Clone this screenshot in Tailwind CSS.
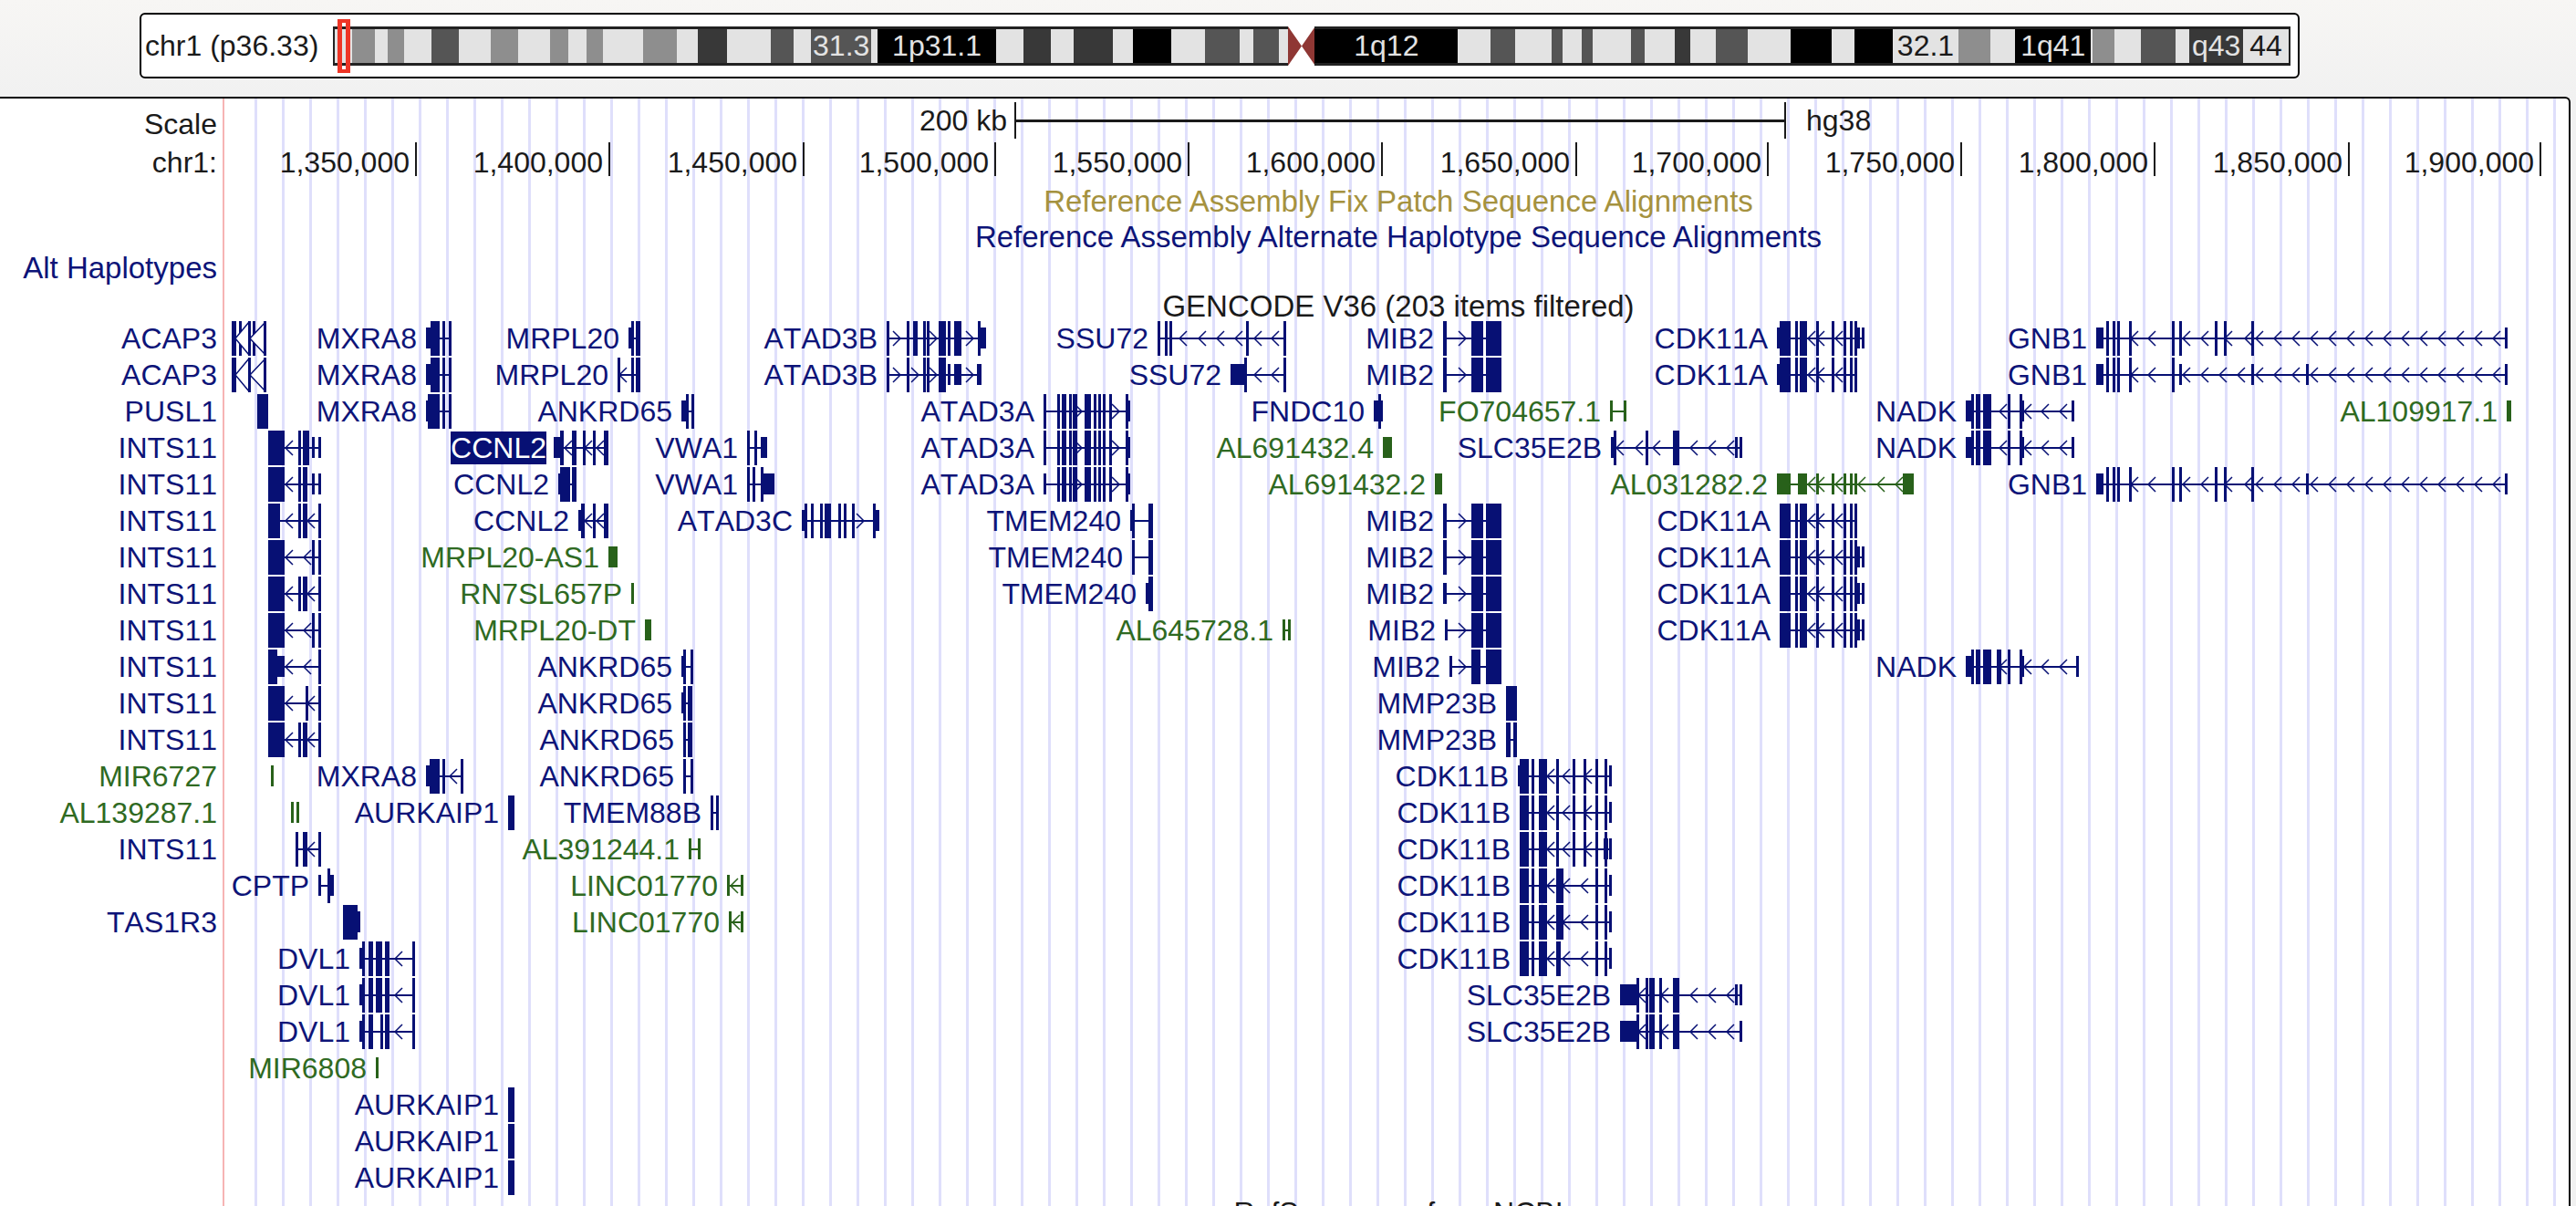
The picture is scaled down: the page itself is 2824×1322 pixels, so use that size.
<!DOCTYPE html>
<html lang="en">
<head>
<meta charset="utf-8">
<title>chr1 genome browser</title>
<script src="https://cdn.jsdelivr.net/npm/@tailwindcss/browser@4"></script>
</head>
<body class="flex h-screen flex-col overflow-hidden bg-[#f1f1f1] font-['Liberation_Sans',Arial,sans-serif] text-[32px] leading-9 text-[#1a1a1a] [font-kerning:none]">

<header class="bg-linear-to-b from-[#f7f6f4] to-[#f1f1f1] pt-3.5 pr-[303px] pb-5 pl-[153px]">
  <div class="flex h-[72px] items-center rounded-md border-2 border-black bg-white pr-2">
    <div class="w-[210px] flex-none pl-1 whitespace-nowrap">chr1 (p36.33)</div>
    <div class="relative flex h-[43px] flex-1">
      <div id="bands" class="flex h-full w-full"></div>
      <div class="absolute -top-2 left-[5px] h-[59px] w-3.5 border-x-[5px] border-y-4 border-[#ee3526]"></div>
    </div>
  </div>
</header>

<main class="relative mr-[6px] flex-1 overflow-hidden rounded-tr-md border-t-2 border-r-2 border-black bg-white">
  <div class="absolute inset-y-0 right-0 left-[244px] border-l-2 border-[#f6b4b4]">
    <svg id="grid" class="size-full" shape-rendering="crispEdges" aria-hidden="true"></svg>
  </div>

  <div class="relative">
    <div class="flex h-12">
      <div class="w-[246px] flex-none pt-2.5 pr-2 text-right">Scale</div>
      <div id="scale" class="relative flex-1"></div>
    </div>
    <div class="flex h-11">
      <div class="w-[246px] flex-none pt-1 pr-2 text-right">chr1:</div>
      <div id="ruler" class="relative flex-1"></div>
    </div>
    <h2 class="flex h-[42px] items-center justify-center pl-[250px] text-[33px] text-[#a5923f] [font-kerning:normal]">Reference Assembly Fix Patch Sequence Alignments</h2>
    <h2 class="flex h-9 items-center justify-center pl-[250px] text-[33px] text-[#0d1478] [font-kerning:normal]">Reference Assembly Alternate Haplotype Sequence Alignments</h2>
    <div class="flex h-8 items-center"><a href="#alt" class="w-[246px] pr-2 text-right text-[33px] whitespace-nowrap text-[#0d1478]">Alt Haplotypes</a></div>
    <h2 class="flex h-[41px] items-center justify-center pt-2.5 pl-[250px] text-[33px] [font-kerning:normal]">GENCODE V36 (203 items filtered)</h2>
    <div id="genes"></div>
    <h2 class="flex h-9 items-center justify-center pl-[250px]">RefSeq genes from NCBI</h2>
  </div>
</main>

<script>
// Horizontal positions are drawing units; the plot spans PLOT_START..PLOT_END and scales with the window.
const PLOT_START = 246, PLOT_END = 2816;
const pct = v => (v / (PLOT_END - PLOT_START) * 100).toFixed(4) + '%';
const at = x => pct(x - PLOT_START);
const fromRight = x => pct(PLOT_END - x);
const NAVY = '#071074', GREEN = '#28611a';

// Cytogenetic bands: [end, shade, label]; L light, G grey, D dark, X darker, K black, C centromere
const shades = {
  L: 'bg-[#e3e3e3] text-[#1a1a1a]', G: 'bg-[#8e8e8e] text-white', D: 'bg-[#555555] text-[#e3e3e3]',
  X: 'bg-[#383838] text-[#e3e3e3]', K: 'bg-black text-[#e3e3e3]'
};
const bands = [[384,'L'],[409,'G'],[423,'L'],[441,'G'],[471,'L'],[501,'D'],[536,'L'],[566,'G'],[601,'L'],[621,'G'],[641,'L'],[659,'G'],[703,'L'],[741,'G'],[764,'L'],[796,'X'],[844,'L'],[869,'D'],[888,'L'],[954,'D','31.3'],[961,'L'],[1091,'K','1p31.1'],[1121,'L'],[1151,'X'],[1176,'L'],[1219,'X'],[1241,'L'],[1283,'K'],[1320,'L'],[1358,'D'],[1373,'L'],[1401,'D'],[1411,'L'],[1441,'C'],[1598,'K','1q12'],[1634,'L'],[1661,'D'],[1701,'L'],[1713,'D'],[1734,'L'],[1746,'D'],[1788,'L'],[1803,'D'],[1836,'L'],[1853,'X'],[1881,'L'],[1916,'D'],[1963,'L'],[2008,'K'],[2033,'L'],[2075,'K'],[2148,'L','32.1'],[2183,'G'],[2210,'L'],[2293,'K','1q41'],[2295,'L'],[2319,'G'],[2348,'L'],[2386,'D'],[2401,'L'],[2460,'X','q43'],[2510,'L','44']];
let prev = 365;
document.getElementById('bands').innerHTML = bands.map(([end, s, label = '']) => {
  const grow = `flex-grow:${end - prev}`;
  prev = end;
  if (s === 'C') return `<svg class="h-full w-0 basis-0" style="${grow}" viewBox="0 0 30 43" preserveAspectRatio="none"><path d="M0 0 15 21.5 0 43ZM30 0 15 21.5 30 43Z" fill="#8f3734"/></svg>`;
  return `<div class="flex w-0 basis-0 items-center justify-center border-y-[3px] border-[#222222] whitespace-nowrap first:border-l-2 last:border-r-2 ${shades[s]}" style="${grow}">${label}</div>`;
}).join('');

let lines = '';
for (let x = 279; x < PLOT_END; x += 30) lines += `<rect x="${at(x)}" width="3" height="100%" fill="#dfdffb"/>`;
document.getElementById('grid').innerHTML = lines;

document.getElementById('scale').innerHTML =
  `<div class="absolute top-1.5 whitespace-nowrap" style="right:${fromRight(1104)}">200 kb</div>
   <div class="absolute top-1 flex h-10 items-center border-x-2 border-[#1a1a1a]" style="left:${at(1112)};right:${fromRight(1958)}"><div class="h-[3px] w-full bg-[#1a1a1a]"></div></div>
   <div class="absolute top-1.5 whitespace-nowrap" style="left:${at(1980)}">hg38</div>`;

const ticks = [455, 667, 880, 1090, 1302, 1514, 1727, 1937, 2149, 2361, 2574, 2784];
document.getElementById('ruler').innerHTML = ticks.map((x, i) =>
  `<div class="absolute top-0 h-[37px] border-r-2 border-[#1a1a1a] pt-1 pr-1.5 whitespace-nowrap" style="right:${fromRight(x + 2)}">${(1350000 + i * 50000).toLocaleString('en-US')}</div>`).join('');

// Gene models: t = coding exon, u = untranslated exon (start:width); < and > list intron arrow tips; z = large open arrow
const run = (a, b) => { const r = []; for (let x = a; x <= b; x += 20) r.push(x); return r.join(','); };
const mxra8 = 'u467:5 t472:10 t485:2 t492:2';
const dvl1 = 'u394:3 t397:2 t404:5 t412:7 t422:5 t452:2 <433';
const aur = 't557:7';
const atad3a = 't1159:2 t1164:5 t1172:2 t1176:5 t1189:7 t1199:2 t1204:2 t1209:2 t1216:2 t1234:2 u1236:3 >1186,1227';
const mib2 = 't1582:4 t1613:13 t1629:17 >1607';
const cdkb = 't1666:10 t1679:2 t1687:9 t1706:2 t1724:2 t1736:2 t1749:2 t1759:2 u1764:2 <1696,1713,1737';
const cdkbShort = 't1666:10 t1679:2 t1687:9 t1706:8 t1749:2 t1759:2 u1764:2 <1696,1713,1733';
const cdka = 't1951:12 t1968:2 t1973:8 t1991:2 t2008:2 t2021:2 t2028:2 t2033:2 <1982,1992,2012';
const cdkaEnd = ' u2036:2 u2041:2';
const nadk = 'u2155:6 t2161:2 t2166:5 t2174:9 t2201:2 t2214:2 u2216:3 u2271:2 <2192,2219,2238,2258';
const gnbHead = 'u2298:8 t2309:2 t2316:2 t2321:2 t2334:2 t2381:2 ';
const gnb = gnbHead + 't2389:2 t2428:2 t2438:2 t2468:2 u2746:2 <2336,2355,2393,2413,2439,2461,' + run(2473, 2733);
const gnbB = gnbHead + 'u2389:2 u2468:2 u2528:2 u2746:2 <2336,2355,2393,2413,2433,2453,' + run(2473, 2733);
const ints = { a: 't294:18 t327:2 t332:7 u342:2 u349:2 <313', b: 't294:18 t327:2 t332:5 u342:2 u349:2 <313',
  c: 't294:13 t327:2 t332:5 t349:2 <313,337', d: 't294:18 t342:2 t349:2 <313,333', e: 't294:18 t327:2 t332:5 t349:2 <313,337' };

// Each row: [label, model, flags]; flags: m = label in the margin, g = non-coding, h = highlighted
const rows = [
  [['ACAP3','t254:5 t262:2 t277:2 z258:15 z274:17 t272:2 t289:2','m'],['MXRA8',mxra8],['MRPL20','u689:3 t692:2 t697:5'],['ATAD3B','t972:2 t994:2 t1001:5 t1012:2 t1016:2 t1029:8 t1039:2 t1046:8 t1072:2 u1073:8 >987,1027,1067'],['SSU72','t1269:2 t1277:2 t1282:2 t1366:2 t1407:2 <1293,1314,1334,1354,1375,1394'],['MIB2',mib2],['CDK11A','u1948:3 '+cdka+cdkaEnd],['GNB1',gnb]],
  [['ACAP3','t254:5 z258:15 z274:17 t272:2 t289:2','m'],['MXRA8',mxra8],['MRPL20','t677:2 t692:2 t697:5 <679'],['ATAD3B','t972:2 t994:2 t1012:2 t1016:2 t1029:8 u1039:2 u1046:8 u1071:5 >987,1007,1027,1067'],['SSU72','u1349:16 t1364:2 t1407:2 <1375,1394'],['MIB2',mib2],['CDK11A','u1948:3 '+cdka],['GNB1',gnbB]],
  [['PUSL1','t282:12','m'],['MXRA8','u467:3 t469:13 t485:2 t492:2'],['ANKRD65','u747:5 t752:2 t758:2'],['ATAD3A','t1144:2 '+atad3a],['FNDC10','u1506:10 t1511:2'],['FO704657.1','u1765:2 u1780:2','g'],['NADK',nadk],['AL109917.1','u2748:5','g']],
  [['INTS11',ints.a,'m'],['CCNL2','u607:7 t614:4 t627:5 t639:2 t650:2 t662:5 <619,641,654','h'],['VWA1','t819:2 t827:2 u834:7'],['ATAD3A','t1144:2 '+atad3a],['AL691432.4','u1516:10','g'],['SLC35E2B','u1766:2 t1769:2 t1804:2 t1834:7 u1902:2 u1907:2 <1772,1793,1812,1853,1873,1893'],['NADK',nadk]],
  [['INTS11',ints.b,'m'],['CCNL2','u612:3 t614:11 t627:5'],['VWA1','t819:2 t825:2 t834:2 u836:13'],['ATAD3A','u1144:2 '+atad3a],['AL691432.2','u1573:8','g'],['AL031282.2','u1948:15 u1971:10 u1991:2 u2008:2 u2021:2 u2028:2 u2033:2 u2086:12 <1982,1992,2012,2037,2058,2078','g'],['GNB1',gnb+' u2528:2']],
  [['INTS11',ints.c,'m'],['CCNL2','u634:3 t637:4 t650:2 t662:5 <641,654'],['ATAD3C','u879:3 t882:2 t889:2 t899:2 t904:7 t919:2 t925:2 t934:2 t957:2 u958:6 >947'],['TMEM240','u1239:2 t1241:2 t1259:5'],['MIB2',mib2],['CDK11A',cdka]],
  [['INTS11',ints.d,'m'],['MRPL20-AS1','u667:10','g'],['TMEM240','t1241:2 t1259:5'],['MIB2',mib2],['CDK11A',cdka+cdkaEnd]],
  [['INTS11',ints.e,'m'],['RN7SL657P','u692:2','g'],['TMEM240','u1256:3 t1259:5'],['MIB2','u1582:4 t1613:13 t1629:17 >1607'],['CDK11A',cdka+cdkaEnd]],
  [['INTS11',ints.d,'m'],['MRPL20-DT','u707:7','g'],['AL645728.1','u1406:2 u1412:2','g'],['MIB2','u1584:2 t1613:13 t1629:17 >1607'],['CDK11A',cdka+cdkaEnd]],
  [['INTS11','t294:10 u304:8 t349:2 <313,333','m'],['ANKRD65','u747:4 t749:2 t757:2'],['MIB2','u1589:2 t1613:10 t1629:17 >1607'],['NADK',nadk.replace('t2174:9','t2174:9 t2189:5').replace('u2271','u2276')]],
  [['INTS11','t294:18 t335:2 t349:2 <313,337','m'],['ANKRD65','u747:3 t749:2 t754:5'],['MMP23B','t1651:12']],
  [['INTS11',ints.e,'m'],['ANKRD65','t749:2 t754:5'],['MMP23B','t1651:5 t1659:4']],
  [['MIR6727','u297:2','mg'],['MXRA8','u467:5 t471:11 t485:2 t505:2 <493'],['ANKRD65','t749:2 t757:2'],['CDK11B','u1664:2 '+cdkb]],
  [['AL139287.1','u319:2 u325:2','mg'],['AURKAIP1',aur],['TMEM88B','t779:2 t785:2'],['CDK11B',cdkb]],
  [['INTS11','t324:2 t332:5 t349:2 <337','m'],['AL391244.1','u755:2 u765:2','g'],['CDK11B',cdkb+' u1758:5']],
  [['CPTP','u349:2 t359:2 u361:5'],['LINC01770','u797:2 u812:2 <801','g'],['CDK11B',cdkbShort]],
  [['TAS1R3','t376:16 u392:2','m'],['LINC01770','u799:2 u812:2 <803','g'],['CDK11B',cdkbShort]],
  [['DVL1',dvl1],['CDK11B',cdkbShort.replace('t1706:8','t1706:5')]],
  [['DVL1',dvl1],['SLC35E2B','u1776:19 t1794:2 t1804:2 t1808:6 t1819:2 t1834:7 u1902:2 u1907:2 <1796,1821,1853,1873,1893']],
  [['DVL1',dvl1.replace('t412:7','t417:2')],['SLC35E2B','u1776:19 t1794:2 t1804:2 t1808:6 t1819:2 t1834:7 u1907:2 <1796,1821,1853,1873,1893']],
  [['MIR6808','u412:2','g']],
  [['AURKAIP1',aur]], [['AURKAIP1',aur]], [['AURKAIP1',aur]]
];

function draw([name, model, flags = '']) {
  const color = flags.includes('g') ? GREEN : NAVY;
  let lo = Infinity, hi = 0, shapes = '';
  const chevron = (tip, d, fill = 'none') => `<svg x="${at(tip)}" y="20" width="1" height="1" overflow="visible"><path d="${d}" fill="${fill}" stroke="${color}" stroke-width="1.5" shape-rendering="auto"/></svg>`;
  for (const part of model.trim().split(/\s+/)) {
    const kind = part[0], rest = part.slice(1);
    if (kind === '<') shapes += rest.split(',').map(t => chevron(+t, 'M8 -8 0 0 8 8')).join('');
    else if (kind === '>') shapes += rest.split(',').map(t => chevron(+t, 'M-8 -8 0 0 -8 8')).join('');
    else {
      const [x, width] = rest.split(':').map(Number);
      if (kind === 'z') { shapes += chevron(x, `M${width} -18 0 0 ${width} 18`, 'white'); continue; }
      const w = Math.max(width, 3);
      lo = Math.min(lo, x); hi = Math.max(hi, x + w);
      shapes += `<rect x="${at(x)}" width="${pct(w)}" y="${kind === 't' ? 1 : 8}" height="${kind === 't' ? 38 : 23}"/>`;
    }
  }
  if (!model.includes('z') && name !== 'AL139287.1') shapes += `<rect x="${at(lo)}" width="${pct(hi - lo)}" y="19" height="2"/>`;
  const tone = flags.includes('h') ? 'bg-[#071074] text-white h-9' : flags.includes('g') ? 'text-[#2f6a22]' : 'text-[#0d1478]';
  const link = flags.includes('m') ? '' : `<a href="#${name}" class="absolute top-0.5 whitespace-nowrap ${tone}" style="right:${fromRight(lo - (flags.includes('h') ? 8 : 10))}">${name}</a>`;
  return { svg: `<g fill="${color}">${shapes}</g>`, link, margin: flags.includes('m') ? `<a href="#${name}" class="${tone}">${name}</a>` : '' };
}

document.getElementById('genes').innerHTML = rows.map(row => {
  const g = row.map(draw);
  return `<div class="flex h-10">
    <div class="w-[246px] flex-none pt-0.5 pr-2 text-right whitespace-nowrap">${g.map(o => o.margin).join('')}</div>
    <div class="relative flex-1"><svg class="absolute inset-0 size-full" shape-rendering="crispEdges" aria-hidden="true">${g.map(o => o.svg).join('')}</svg>${g.map(o => o.link).join('')}</div>
  </div>`;
}).join('');
</script>
</body>
</html>
